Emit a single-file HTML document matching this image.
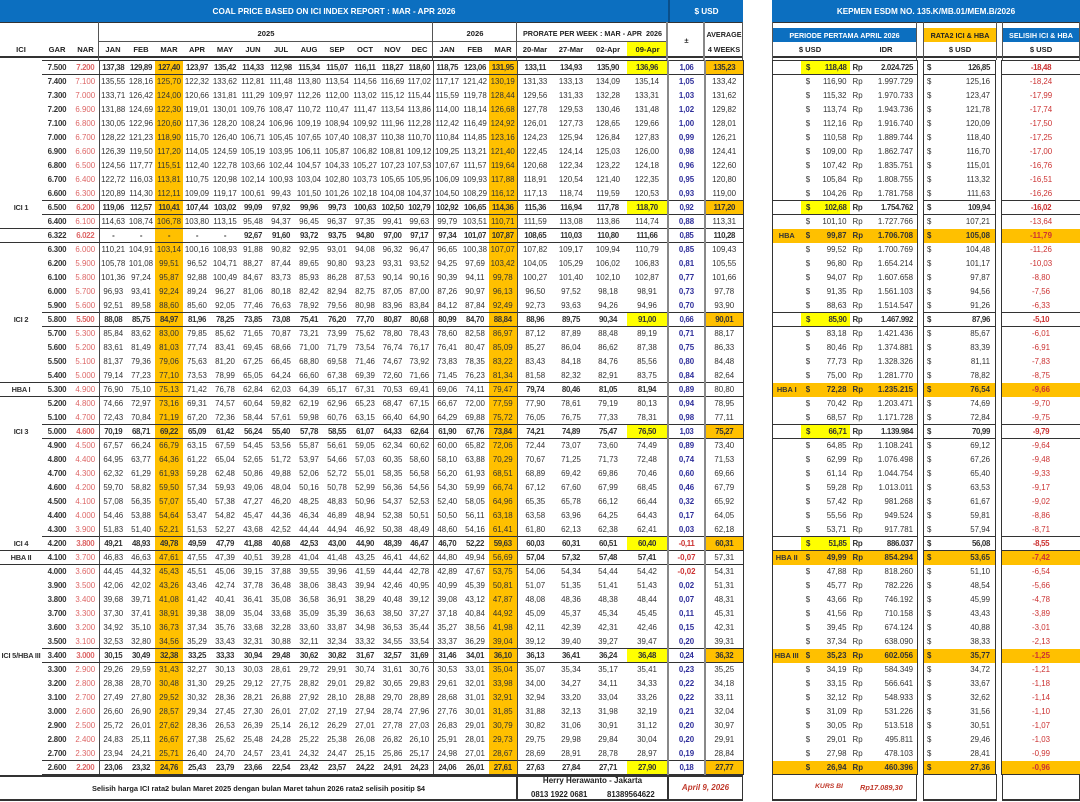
<!DOCTYPE html>
<html><head><meta charset="utf-8">
<style>
*{box-sizing:border-box}
body{margin:0;width:1080px;height:802px;overflow:hidden;background:#fff;font-family:"Liberation Sans",Arial,sans-serif;font-size:7.9px;color:#333;position:relative}
.a{position:absolute}
.blue{background:#0c6fc0;color:#fff;font-weight:bold;display:flex;align-items:center;justify-content:center;font-size:8.2px;white-space:nowrap}
.h{position:absolute;font-weight:bold;font-size:7.6px;text-align:center;color:#222;white-space:nowrap}
.vl{position:absolute;width:1px;background:#555}
.hl{position:absolute;height:1px;background:#555}
table{position:absolute;border-collapse:collapse;table-layout:fixed}
td{height:14px;padding:0;text-align:center;white-space:nowrap;line-height:13px;overflow:visible}
b{letter-spacing:-0.3px}
#L{left:0;top:60px;width:743px}
#L td:nth-child(1){font-weight:bold;font-size:7.4px;letter-spacing:-0.2px}
#L td:nth-child(2){font-weight:bold;letter-spacing:-0.2px}
#L td:nth-child(3){color:#d66}
#L td:nth-child(3),#L td:nth-child(15),#L td:nth-child(18){border-right:1px solid #444}
#L td:nth-child(22),#L td:nth-child(23){border-right:2px solid #888}
#L td:nth-child(24){border-right:1px solid #333}
#L td:nth-child(6),#L td:nth-child(18){background:#ffc000}
#L td:nth-child(23){color:#2e2e9a;font-weight:bold}
#L td.n{color:#c33}
tr.i td{font-weight:bold;letter-spacing:-0.35px;border-top:1.5px solid #333;border-bottom:1.5px solid #333}
#L tr.i td:nth-child(22){background:#ffff00}
#L tr.i td:nth-child(24){background:#ffc000}
#L tr.i td:nth-child(1),#R tr.i td:nth-child(6),#R tr.i td:nth-child(9){border-top:none;border-bottom:none}
tr.bx td{border-top:1px solid #333;border-bottom:1px solid #333}
tr.bb td{font-weight:bold;letter-spacing:-0.35px}
#R{left:772px;top:60px;width:308px}
#R td:nth-child(1){border-left:1px solid #333;font-weight:bold;font-size:7.4px}
#R td:nth-child(3){text-align:right;padding-right:3px}
#R td:nth-child(4){text-align:left;padding-left:3px}
#R td:nth-child(5){text-align:right;padding-right:4px;border-right:1px solid #333}
#R td:nth-child(7){text-align:left;padding-left:3px;border-left:1px solid #333}
#R td:nth-child(8){text-align:right;padding-right:5px;border-right:1px solid #333}
#R td:nth-child(10){color:#c33;border-left:1px solid #333;border-right:1px solid #333}
#R tr.o td{background:#ffc000;font-weight:bold}
#R tr.o td:nth-child(6),#R tr.o td:nth-child(9){background:#fff}
#R tr.y td:nth-child(2),#R tr.y td:nth-child(3){background:#ffff00}
</style></head><body>
<div class="a blue" style="left:0;top:0;width:668px;height:22px">COAL PRICE BASED ON ICI INDEX REPORT : MAR - APR 2026</div>
<div class="a blue" style="left:668px;top:0;width:75px;height:22px;border-left:2px solid #0a4f8a">$ USD</div>
<div class="a blue" style="left:772px;top:0;width:308px;height:22px">KEPMEN ESDM NO. 135.K/MB.01/MEM.B/2026</div>
<div class="h" style="left:99px;top:29px;width:334px">2025</div>
<div class="h" style="left:433px;top:29px;width:84px">2026</div>
<div class="h" style="left:517px;top:29px;width:151px;font-size:7.2px">PRORATE PER WEEK : MAR - APR &nbsp;2026</div>
<div class="h" style="left:668px;top:36px;width:37px">±</div>
<div class="h" style="left:705px;top:30px;width:38px;font-size:7.2px">AVERAGE</div>
<div class="h" style="left:705px;top:45px;width:38px;font-size:7.2px">4 WEEKS</div>
<div class="a" style="left:627px;top:42px;width:41px;height:14px;background:#ffff00"></div>
<div class="h" style="left:0;top:45px;width:42px">ICI</div>
<div class="h" style="left:42px;top:45px;width:30px">GAR</div>
<div class="h" style="left:72px;top:45px;width:27px">NAR</div>
<div class="h" style="left:99px;top:45px;width:28px">JAN</div>
<div class="h" style="left:127px;top:45px;width:28px">FEB</div>
<div class="h" style="left:155px;top:45px;width:28px">MAR</div>
<div class="h" style="left:183px;top:45px;width:28px">APR</div>
<div class="h" style="left:211px;top:45px;width:28px">MAY</div>
<div class="h" style="left:239px;top:45px;width:28px">JUN</div>
<div class="h" style="left:267px;top:45px;width:28px">JUL</div>
<div class="h" style="left:295px;top:45px;width:28px">AUG</div>
<div class="h" style="left:323px;top:45px;width:28px">SEP</div>
<div class="h" style="left:351px;top:45px;width:28px">OCT</div>
<div class="h" style="left:379px;top:45px;width:27px">NOV</div>
<div class="h" style="left:406px;top:45px;width:27px">DEC</div>
<div class="h" style="left:433px;top:45px;width:28px">JAN</div>
<div class="h" style="left:461px;top:45px;width:28px">FEB</div>
<div class="h" style="left:489px;top:45px;width:28px">MAR</div>
<div class="h" style="left:517px;top:45px;width:36px">20-Mar</div>
<div class="h" style="left:553px;top:45px;width:36px">27-Mar</div>
<div class="h" style="left:589px;top:45px;width:38px">02-Apr</div>
<div class="h" style="left:627px;top:45px;width:41px">09-Apr</div>
<div class="hl" style="left:0;top:22px;width:743px;background:#333"></div>
<div class="hl" style="left:99px;top:41px;width:569px"></div>
<div class="hl" style="left:0;top:56px;width:743px;height:2px;background:#333"></div>
<div class="vl" style="left:98px;top:22px;height:38px"></div>
<div class="vl" style="left:432px;top:22px;height:38px"></div>
<div class="vl" style="left:516px;top:22px;height:38px"></div>
<div class="vl" style="left:666px;top:22px;height:38px;width:2px;background:#888"></div>
<div class="vl" style="left:703px;top:22px;height:38px;width:2px;background:#888"></div>
<div class="vl" style="left:742px;top:22px;height:38px"></div>
<div class="a blue" style="left:772px;top:28px;width:145px;height:14px;font-size:7.2px">PERIODE PERTAMA APRIL 2026</div>
<div class="a blue" style="left:923px;top:28px;width:74px;height:14px;font-size:7.2px;background:#ffc000;color:#222">RATA2 ICI &amp; HBA</div>
<div class="a blue" style="left:1002px;top:28px;width:78px;height:14px;font-size:7.2px">SELISIH ICI &amp; HBA</div>
<div class="h" style="left:795px;top:45px;width:30px">$ USD</div>
<div class="h" style="left:866px;top:45px;width:40px">IDR</div>
<div class="h" style="left:923px;top:45px;width:74px">$ USD</div>
<div class="h" style="left:1002px;top:45px;width:78px">$ USD</div>
<div class="hl" style="left:772px;top:22px;width:308px;background:#333"></div>
<div class="hl" style="left:772px;top:56px;width:308px;height:2px;background:#333"></div>
<div class="vl" style="left:772px;top:22px;height:38px"></div>
<div class="vl" style="left:916px;top:22px;height:38px"></div>
<div class="vl" style="left:923px;top:22px;height:38px"></div>
<div class="vl" style="left:996px;top:22px;height:38px"></div>
<div class="vl" style="left:1002px;top:22px;height:38px"></div>
<div class="vl" style="left:1079px;top:22px;height:38px"></div>

<table id="L">
<colgroup><col style="width:42px"><col style="width:30px"><col style="width:27px"><col style="width:28px"><col style="width:28px"><col style="width:28px"><col style="width:28px"><col style="width:28px"><col style="width:28px"><col style="width:28px"><col style="width:28px"><col style="width:28px"><col style="width:28px"><col style="width:27px"><col style="width:27px"><col style="width:28px"><col style="width:28px"><col style="width:28px"><col style="width:36px"><col style="width:36px"><col style="width:38px"><col style="width:41px"><col style="width:37px"><col style="width:38px"></colgroup>
<tr class="i"><td><td>7.500<td>7.200<td>137,38<td>129,89<td>127,40<td>123,97<td>135,42<td>114,33<td>112,98<td>115,34<td>115,07<td>116,11<td>118,27<td>118,60<td>118,75<td>123,06<td>131,95<td>133,11<td>134,93<td>135,90<td>136,96<td>1,06<td>135,23</tr>
<tr><td><td>7.400<td>7.100<td>135,55<td>128,16<td>125,70<td>122,32<td>133,62<td>112,81<td>111,48<td>113,80<td>113,54<td>114,56<td>116,69<td>117,02<td>117,17<td>121,42<td>130,19<td>131,33<td>133,13<td>134,09<td>135,14<td>1,05<td>133,42</tr>
<tr><td><td>7.300<td>7.000<td>133,71<td>126,42<td>124,00<td>120,66<td>131,81<td>111,29<td>109,97<td>112,26<td>112,00<td>113,02<td>115,12<td>115,44<td>115,59<td>119,78<td>128,44<td>129,56<td>131,33<td>132,28<td>133,31<td>1,03<td>131,62</tr>
<tr><td><td>7.200<td>6.900<td>131,88<td>124,69<td>122,30<td>119,01<td>130,01<td>109,76<td>108,47<td>110,72<td>110,47<td>111,47<td>113,54<td>113,86<td>114,00<td>118,14<td>126,68<td>127,78<td>129,53<td>130,46<td>131,48<td>1,02<td>129,82</tr>
<tr><td><td>7.100<td>6.800<td>130,05<td>122,96<td>120,60<td>117,36<td>128,20<td>108,24<td>106,96<td>109,19<td>108,94<td>109,92<td>111,96<td>112,28<td>112,42<td>116,49<td>124,92<td>126,01<td>127,73<td>128,65<td>129,66<td>1,00<td>128,01</tr>
<tr><td><td>7.000<td>6.700<td>128,22<td>121,23<td>118,90<td>115,70<td>126,40<td>106,71<td>105,45<td>107,65<td>107,40<td>108,37<td>110,38<td>110,70<td>110,84<td>114,85<td>123,16<td>124,23<td>125,94<td>126,84<td>127,83<td>0,99<td>126,21</tr>
<tr><td><td>6.900<td>6.600<td>126,39<td>119,50<td>117,20<td>114,05<td>124,59<td>105,19<td>103,95<td>106,11<td>105,87<td>106,82<td>108,81<td>109,12<td>109,25<td>113,21<td>121,40<td>122,45<td>124,14<td>125,03<td>126,00<td>0,98<td>124,41</tr>
<tr><td><td>6.800<td>6.500<td>124,56<td>117,77<td>115,51<td>112,40<td>122,78<td>103,66<td>102,44<td>104,57<td>104,33<td>105,27<td>107,23<td>107,53<td>107,67<td>111,57<td>119,64<td>120,68<td>122,34<td>123,22<td>124,18<td>0,96<td>122,60</tr>
<tr><td><td>6.700<td>6.400<td>122,72<td>116,03<td>113,81<td>110,75<td>120,98<td>102,14<td>100,93<td>103,04<td>102,80<td>103,73<td>105,65<td>105,95<td>106,09<td>109,93<td>117,88<td>118,91<td>120,54<td>121,40<td>122,35<td>0,95<td>120,80</tr>
<tr><td><td>6.600<td>6.300<td>120,89<td>114,30<td>112,11<td>109,09<td>119,17<td>100,61<td>99,43<td>101,50<td>101,26<td>102,18<td>104,08<td>104,37<td>104,50<td>108,29<td>116,12<td>117,13<td>118,74<td>119,59<td>120,53<td>0,93<td>119,00</tr>
<tr class="i"><td>ICI 1<td>6.500<td>6.200<td>119,06<td>112,57<td>110,41<td>107,44<td>103,02<td>99,09<td>97,92<td>99,96<td>99,73<td>100,63<td>102,50<td>102,79<td>102,92<td>106,65<td>114,36<td>115,36<td>116,94<td>117,78<td>118,70<td>0,92<td>117,20</tr>
<tr><td><td>6.400<td>6.100<td>114,63<td>108,74<td>106,78<td>103,80<td>113,15<td>95,48<td>94,37<td>96,45<td>96,37<td>97,35<td>99,41<td>99,63<td>99,79<td>103,51<td>110,71<td>111,59<td>113,08<td>113,86<td>114,74<td>0,88<td>113,31</tr>
<tr class="bx bb"><td><td>6.322<td>6.022<td>-<td>-<td>-<td>-<td>-<td>92,67<td>91,60<td>93,72<td>93,75<td>94,80<td>97,00<td>97,17<td>97,34<td>101,07<td>107,87<td>108,65<td>110,03<td>110,80<td>111,66<td>0,85<td>110,28</tr>
<tr><td><td>6.300<td>6.000<td>110,21<td>104,91<td>103,14<td>100,16<td>108,93<td>91,88<td>90,82<td>92,95<td>93,01<td>94,08<td>96,32<td>96,47<td>96,65<td>100,38<td>107,07<td>107,82<td>109,17<td>109,94<td>110,79<td>0,85<td>109,43</tr>
<tr><td><td>6.200<td>5.900<td>105,78<td>101,08<td>99,51<td>96,52<td>104,71<td>88,27<td>87,44<td>89,65<td>90,80<td>93,23<td>93,31<td>93,52<td>94,25<td>97,69<td>103,42<td>104,05<td>105,29<td>106,02<td>106,83<td>0,81<td>105,55</tr>
<tr><td><td>6.100<td>5.800<td>101,36<td>97,24<td>95,87<td>92,88<td>100,49<td>84,67<td>83,73<td>85,93<td>86,28<td>87,53<td>90,14<td>90,16<td>90,39<td>94,11<td>99,78<td>100,27<td>101,40<td>102,10<td>102,87<td>0,77<td>101,66</tr>
<tr><td><td>6.000<td>5.700<td>96,93<td>93,41<td>92,24<td>89,24<td>96,27<td>81,06<td>80,18<td>82,42<td>82,94<td>82,75<td>87,05<td>87,00<td>87,26<td>90,97<td>96,13<td>96,50<td>97,52<td>98,18<td>98,91<td>0,73<td>97,78</tr>
<tr><td><td>5.900<td>5.600<td>92,51<td>89,58<td>88,60<td>85,60<td>92,05<td>77,46<td>76,63<td>78,92<td>79,56<td>80,98<td>83,96<td>83,84<td>84,12<td>87,84<td>92,49<td>92,73<td>93,63<td>94,26<td>94,96<td>0,70<td>93,90</tr>
<tr class="i"><td>ICI 2<td>5.800<td>5.500<td>88,08<td>85,75<td>84,97<td>81,96<td>78,25<td>73,85<td>73,08<td>75,41<td>76,20<td>77,70<td>80,87<td>80,68<td>80,99<td>84,70<td>88,84<td>88,96<td>89,75<td>90,34<td>91,00<td>0,66<td>90,01</tr>
<tr><td><td>5.700<td>5.300<td>85,84<td>83,62<td>83,00<td>79,85<td>85,62<td>71,65<td>70,87<td>73,21<td>73,99<td>75,62<td>78,80<td>78,43<td>78,60<td>82,58<td>86,97<td>87,12<td>87,89<td>88,48<td>89,19<td>0,71<td>88,17</tr>
<tr><td><td>5.600<td>5.200<td>83,61<td>81,49<td>81,03<td>77,74<td>83,41<td>69,45<td>68,66<td>71,00<td>71,79<td>73,54<td>76,74<td>76,17<td>76,41<td>80,47<td>85,09<td>85,27<td>86,04<td>86,62<td>87,38<td>0,75<td>86,33</tr>
<tr><td><td>5.500<td>5.100<td>81,37<td>79,36<td>79,06<td>75,63<td>81,20<td>67,25<td>66,45<td>68,80<td>69,58<td>71,46<td>74,67<td>73,92<td>73,83<td>78,35<td>83,22<td>83,43<td>84,18<td>84,76<td>85,56<td>0,80<td>84,48</tr>
<tr><td><td>5.400<td>5.000<td>79,14<td>77,23<td>77,10<td>73,53<td>78,99<td>65,05<td>64,24<td>66,60<td>67,38<td>69,39<td>72,60<td>71,66<td>71,45<td>76,23<td>81,34<td>81,58<td>82,32<td>82,91<td>83,75<td>0,84<td>82,64</tr>
<tr class="bx"><td>HBA I<td>5.300<td>4.900<td>76,90<td>75,10<td>75,13<td>71,42<td>76,78<td>62,84<td>62,03<td>64,39<td>65,17<td>67,31<td>70,53<td>69,41<td>69,06<td>74,11<td>79,47<td><b>79,74</b><td><b>80,46</b><td><b>81,05</b><td><b>81,94</b><td>0,89<td>80,80</tr>
<tr><td><td>5.200<td>4.800<td>74,66<td>72,97<td>73,16<td>69,31<td>74,57<td>60,64<td>59,82<td>62,19<td>62,96<td>65,23<td>68,47<td>67,15<td>66,67<td>72,00<td>77,59<td>77,90<td>78,61<td>79,19<td>80,13<td>0,94<td>78,95</tr>
<tr><td><td>5.100<td>4.700<td>72,43<td>70,84<td>71,19<td>67,20<td>72,36<td>58,44<td>57,61<td>59,98<td>60,76<td>63,15<td>66,40<td>64,90<td>64,29<td>69,88<td>75,72<td>76,05<td>76,75<td>77,33<td>78,31<td>0,98<td>77,11</tr>
<tr class="i"><td>ICI 3<td>5.000<td>4.600<td>70,19<td>68,71<td>69,22<td>65,09<td>61,42<td>56,24<td>55,40<td>57,78<td>58,55<td>61,07<td>64,33<td>62,64<td>61,90<td>67,76<td>73,84<td>74,21<td>74,89<td>75,47<td>76,50<td>1,03<td>75,27</tr>
<tr><td><td>4.900<td>4.500<td>67,57<td>66,24<td>66,79<td>63,15<td>67,59<td>54,45<td>53,56<td>55,87<td>56,61<td>59,05<td>62,34<td>60,62<td>60,00<td>65,82<td>72,06<td>72,44<td>73,07<td>73,60<td>74,49<td>0,89<td>73,40</tr>
<tr><td><td>4.800<td>4.400<td>64,95<td>63,77<td>64,36<td>61,22<td>65,04<td>52,65<td>51,72<td>53,97<td>54,66<td>57,03<td>60,35<td>58,60<td>58,10<td>63,88<td>70,29<td>70,67<td>71,25<td>71,73<td>72,48<td>0,74<td>71,53</tr>
<tr><td><td>4.700<td>4.300<td>62,32<td>61,29<td>61,93<td>59,28<td>62,48<td>50,86<td>49,88<td>52,06<td>52,72<td>55,01<td>58,35<td>56,58<td>56,20<td>61,93<td>68,51<td>68,89<td>69,42<td>69,86<td>70,46<td>0,60<td>69,66</tr>
<tr><td><td>4.600<td>4.200<td>59,70<td>58,82<td>59,50<td>57,34<td>59,93<td>49,06<td>48,04<td>50,16<td>50,78<td>52,99<td>56,36<td>54,56<td>54,30<td>59,99<td>66,74<td>67,12<td>67,60<td>67,99<td>68,45<td>0,46<td>67,79</tr>
<tr><td><td>4.500<td>4.100<td>57,08<td>56,35<td>57,07<td>55,40<td>57,38<td>47,27<td>46,20<td>48,25<td>48,83<td>50,96<td>54,37<td>52,53<td>52,40<td>58,05<td>64,96<td>65,35<td>65,78<td>66,12<td>66,44<td>0,32<td>65,92</tr>
<tr><td><td>4.400<td>4.000<td>54,46<td>53,88<td>54,64<td>53,47<td>54,82<td>45,47<td>44,36<td>46,34<td>46,89<td>48,94<td>52,38<td>50,51<td>50,50<td>56,11<td>63,18<td>63,58<td>63,96<td>64,25<td>64,43<td>0,17<td>64,05</tr>
<tr><td><td>4.300<td>3.900<td>51,83<td>51,40<td>52,21<td>51,53<td>52,27<td>43,68<td>42,52<td>44,44<td>44,94<td>46,92<td>50,38<td>48,49<td>48,60<td>54,16<td>61,41<td>61,80<td>62,13<td>62,38<td>62,41<td>0,03<td>62,18</tr>
<tr class="i"><td>ICI 4<td>4.200<td>3.800<td>49,21<td>48,93<td>49,78<td>49,59<td>47,79<td>41,88<td>40,68<td>42,53<td>43,00<td>44,90<td>48,39<td>46,47<td>46,70<td>52,22<td>59,63<td>60,03<td>60,31<td>60,51<td>60,40<td class="n">-0,11<td>60,31</tr>
<tr class="bx"><td>HBA II<td>4.100<td>3.700<td>46,83<td>46,63<td>47,61<td>47,55<td>47,39<td>40,51<td>39,28<td>41,04<td>41,48<td>43,25<td>46,41<td>44,62<td>44,80<td>49,94<td>56,69<td><b>57,04</b><td><b>57,32</b><td><b>57,48</b><td><b>57,41</b><td class="n">-0,07<td>57,31</tr>
<tr><td><td>4.000<td>3.600<td>44,45<td>44,32<td>45,43<td>45,51<td>45,06<td>39,15<td>37,88<td>39,55<td>39,96<td>41,59<td>44,44<td>42,78<td>42,89<td>47,67<td>53,75<td>54,06<td>54,34<td>54,44<td>54,42<td class="n">-0,02<td>54,31</tr>
<tr><td><td>3.900<td>3.500<td>42,06<td>42,02<td>43,26<td>43,46<td>42,74<td>37,78<td>36,48<td>38,06<td>38,43<td>39,94<td>42,46<td>40,95<td>40,99<td>45,39<td>50,81<td>51,07<td>51,35<td>51,41<td>51,43<td>0,02<td>51,31</tr>
<tr><td><td>3.800<td>3.400<td>39,68<td>39,71<td>41,08<td>41,42<td>40,41<td>36,41<td>35,08<td>36,58<td>36,91<td>38,29<td>40,48<td>39,12<td>39,08<td>43,12<td>47,87<td>48,08<td>48,36<td>48,38<td>48,44<td>0,07<td>48,31</tr>
<tr><td><td>3.700<td>3.300<td>37,30<td>37,41<td>38,91<td>39,38<td>38,09<td>35,04<td>33,68<td>35,09<td>35,39<td>36,63<td>38,50<td>37,27<td>37,18<td>40,84<td>44,92<td>45,09<td>45,37<td>45,34<td>45,45<td>0,11<td>45,31</tr>
<tr><td><td>3.600<td>3.200<td>34,92<td>35,10<td>36,73<td>37,34<td>35,76<td>33,68<td>32,28<td>33,60<td>33,87<td>34,98<td>36,53<td>35,44<td>35,27<td>38,56<td>41,98<td>42,11<td>42,39<td>42,31<td>42,46<td>0,15<td>42,31</tr>
<tr><td><td>3.500<td>3.100<td>32,53<td>32,80<td>34,56<td>35,29<td>33,43<td>32,31<td>30,88<td>32,11<td>32,34<td>33,32<td>34,55<td>33,54<td>33,37<td>36,29<td>39,04<td>39,12<td>39,40<td>39,27<td>39,47<td>0,20<td>39,31</tr>
<tr class="i"><td>ICI 5/HBA III<td>3.400<td>3.000<td>30,15<td>30,49<td>32,38<td>33,25<td>33,33<td>30,94<td>29,48<td>30,62<td>30,82<td>31,67<td>32,57<td>31,69<td>31,46<td>34,01<td>36,10<td>36,13<td>36,41<td>36,24<td>36,48<td>0,24<td>36,32</tr>
<tr><td><td>3.300<td>2.900<td>29,26<td>29,59<td>31,43<td>32,27<td>30,13<td>30,03<td>28,61<td>29,72<td>29,91<td>30,74<td>31,61<td>30,76<td>30,53<td>33,01<td>35,04<td>35,07<td>35,34<td>35,17<td>35,41<td>0,23<td>35,25</tr>
<tr><td><td>3.200<td>2.800<td>28,38<td>28,70<td>30,48<td>31,30<td>29,25<td>29,12<td>27,75<td>28,82<td>29,01<td>29,82<td>30,65<td>29,83<td>29,61<td>32,01<td>33,98<td>34,00<td>34,27<td>34,11<td>34,33<td>0,22<td>34,18</tr>
<tr><td><td>3.100<td>2.700<td>27,49<td>27,80<td>29,52<td>30,32<td>28,36<td>28,21<td>26,88<td>27,92<td>28,10<td>28,88<td>29,70<td>28,89<td>28,68<td>31,01<td>32,91<td>32,94<td>33,20<td>33,04<td>33,26<td>0,22<td>33,11</tr>
<tr><td><td>3.000<td>2.600<td>26,60<td>26,90<td>28,57<td>29,34<td>27,45<td>27,30<td>26,01<td>27,02<td>27,19<td>27,94<td>28,74<td>27,96<td>27,76<td>30,01<td>31,85<td>31,88<td>32,13<td>31,98<td>32,19<td>0,21<td>32,04</tr>
<tr><td><td>2.900<td>2.500<td>25,72<td>26,01<td>27,62<td>28,36<td>26,53<td>26,39<td>25,14<td>26,12<td>26,29<td>27,01<td>27,78<td>27,03<td>26,83<td>29,01<td>30,79<td>30,82<td>31,06<td>30,91<td>31,12<td>0,20<td>30,97</tr>
<tr><td><td>2.800<td>2.400<td>24,83<td>25,11<td>26,67<td>27,38<td>25,62<td>25,48<td>24,28<td>25,22<td>25,38<td>26,08<td>26,82<td>26,10<td>25,91<td>28,01<td>29,73<td>29,75<td>29,98<td>29,84<td>30,04<td>0,20<td>29,91</tr>
<tr><td><td>2.700<td>2.300<td>23,94<td>24,21<td>25,71<td>26,40<td>24,70<td>24,57<td>23,41<td>24,32<td>24,47<td>25,15<td>25,86<td>25,17<td>24,98<td>27,01<td>28,67<td>28,69<td>28,91<td>28,78<td>28,97<td>0,19<td>28,84</tr>
<tr class="i"><td><td>2.600<td>2.200<td>23,06<td>23,32<td>24,76<td>25,43<td>23,79<td>23,66<td>22,54<td>23,42<td>23,57<td>24,22<td>24,91<td>24,23<td>24,06<td>26,01<td>27,61<td>27,63<td>27,84<td>27,71<td>27,90<td>0,18<td>27,77</tr>
</table>

<table id="R">
<colgroup><col style="width:28px"><col style="width:15px"><col style="width:34px"><col style="width:17px"><col style="width:51px"><col style="width:6px"><col style="width:13px"><col style="width:59px"><col style="width:6px"><col style="width:79px"></colgroup>
<tr class="i y"><td><td>$<td>118,48<td>Rp<td>2.024.725<td><td>$<td>126,85<td><td>-18,48</tr>
<tr><td><td>$<td>116,90<td>Rp<td>1.997.729<td><td>$<td>125,16<td><td>-18,24</tr>
<tr><td><td>$<td>115,32<td>Rp<td>1.970.733<td><td>$<td>123,47<td><td>-17,99</tr>
<tr><td><td>$<td>113,74<td>Rp<td>1.943.736<td><td>$<td>121,78<td><td>-17,74</tr>
<tr><td><td>$<td>112,16<td>Rp<td>1.916.740<td><td>$<td>120,09<td><td>-17,50</tr>
<tr><td><td>$<td>110,58<td>Rp<td>1.889.744<td><td>$<td>118,40<td><td>-17,25</tr>
<tr><td><td>$<td>109,00<td>Rp<td>1.862.747<td><td>$<td>116,70<td><td>-17,00</tr>
<tr><td><td>$<td>107,42<td>Rp<td>1.835.751<td><td>$<td>115,01<td><td>-16,76</tr>
<tr><td><td>$<td>105,84<td>Rp<td>1.808.755<td><td>$<td>113,32<td><td>-16,51</tr>
<tr><td><td>$<td>104,26<td>Rp<td>1.781.758<td><td>$<td>111,63<td><td>-16,26</tr>
<tr class="i y"><td><td>$<td>102,68<td>Rp<td>1.754.762<td><td>$<td>109,94<td><td>-16,02</tr>
<tr><td><td>$<td>101,10<td>Rp<td>1.727.766<td><td>$<td>107,21<td><td>-13,64</tr>
<tr class="o"><td>HBA<td>$<td>99,87<td>Rp<td>1.706.708<td><td>$<td>105,08<td><td>-11,79</tr>
<tr><td><td>$<td>99,52<td>Rp<td>1.700.769<td><td>$<td>104,48<td><td>-11,26</tr>
<tr><td><td>$<td>96,80<td>Rp<td>1.654.214<td><td>$<td>101,17<td><td>-10,03</tr>
<tr><td><td>$<td>94,07<td>Rp<td>1.607.658<td><td>$<td>97,87<td><td>-8,80</tr>
<tr><td><td>$<td>91,35<td>Rp<td>1.561.103<td><td>$<td>94,56<td><td>-7,56</tr>
<tr><td><td>$<td>88,63<td>Rp<td>1.514.547<td><td>$<td>91,26<td><td>-6,33</tr>
<tr class="i y"><td><td>$<td>85,90<td>Rp<td>1.467.992<td><td>$<td>87,96<td><td>-5,10</tr>
<tr><td><td>$<td>83,18<td>Rp<td>1.421.436<td><td>$<td>85,67<td><td>-6,01</tr>
<tr><td><td>$<td>80,46<td>Rp<td>1.374.881<td><td>$<td>83,39<td><td>-6,91</tr>
<tr><td><td>$<td>77,73<td>Rp<td>1.328.326<td><td>$<td>81,11<td><td>-7,83</tr>
<tr><td><td>$<td>75,00<td>Rp<td>1.281.770<td><td>$<td>78,82<td><td>-8,75</tr>
<tr class="o"><td>HBA I<td>$<td>72,28<td>Rp<td>1.235.215<td><td>$<td>76,54<td><td>-9,66</tr>
<tr><td><td>$<td>70,42<td>Rp<td>1.203.471<td><td>$<td>74,69<td><td>-9,70</tr>
<tr><td><td>$<td>68,57<td>Rp<td>1.171.728<td><td>$<td>72,84<td><td>-9,75</tr>
<tr class="i y"><td><td>$<td>66,71<td>Rp<td>1.139.984<td><td>$<td>70,99<td><td>-9,79</tr>
<tr><td><td>$<td>64,85<td>Rp<td>1.108.241<td><td>$<td>69,12<td><td>-9,64</tr>
<tr><td><td>$<td>62,99<td>Rp<td>1.076.498<td><td>$<td>67,26<td><td>-9,48</tr>
<tr><td><td>$<td>61,14<td>Rp<td>1.044.754<td><td>$<td>65,40<td><td>-9,33</tr>
<tr><td><td>$<td>59,28<td>Rp<td>1.013.011<td><td>$<td>63,53<td><td>-9,17</tr>
<tr><td><td>$<td>57,42<td>Rp<td>981.268<td><td>$<td>61,67<td><td>-9,02</tr>
<tr><td><td>$<td>55,56<td>Rp<td>949.524<td><td>$<td>59,81<td><td>-8,86</tr>
<tr><td><td>$<td>53,71<td>Rp<td>917.781<td><td>$<td>57,94<td><td>-8,71</tr>
<tr class="i y"><td><td>$<td>51,85<td>Rp<td>886.037<td><td>$<td>56,08<td><td>-8,55</tr>
<tr class="o"><td>HBA II<td>$<td>49,99<td>Rp<td>854.294<td><td>$<td>53,65<td><td>-7,42</tr>
<tr><td><td>$<td>47,88<td>Rp<td>818.260<td><td>$<td>51,10<td><td>-6,54</tr>
<tr><td><td>$<td>45,77<td>Rp<td>782.226<td><td>$<td>48,54<td><td>-5,66</tr>
<tr><td><td>$<td>43,66<td>Rp<td>746.192<td><td>$<td>45,99<td><td>-4,78</tr>
<tr><td><td>$<td>41,56<td>Rp<td>710.158<td><td>$<td>43,43<td><td>-3,89</tr>
<tr><td><td>$<td>39,45<td>Rp<td>674.124<td><td>$<td>40,88<td><td>-3,01</tr>
<tr><td><td>$<td>37,34<td>Rp<td>638.090<td><td>$<td>38,33<td><td>-2,13</tr>
<tr class="o"><td>HBA III<td>$<td>35,23<td>Rp<td>602.056<td><td>$<td>35,77<td><td>-1,25</tr>
<tr><td><td>$<td>34,19<td>Rp<td>584.349<td><td>$<td>34,72<td><td>-1,21</tr>
<tr><td><td>$<td>33,15<td>Rp<td>566.641<td><td>$<td>33,67<td><td>-1,18</tr>
<tr><td><td>$<td>32,12<td>Rp<td>548.933<td><td>$<td>32,62<td><td>-1,14</tr>
<tr><td><td>$<td>31,09<td>Rp<td>531.226<td><td>$<td>31,56<td><td>-1,10</tr>
<tr><td><td>$<td>30,05<td>Rp<td>513.518<td><td>$<td>30,51<td><td>-1,07</tr>
<tr><td><td>$<td>29,01<td>Rp<td>495.811<td><td>$<td>29,46<td><td>-1,03</tr>
<tr><td><td>$<td>27,98<td>Rp<td>478.103<td><td>$<td>28,41<td><td>-0,99</tr>
<tr class="o"><td><td>$<td>26,94<td>Rp<td>460.396<td><td>$<td>27,36<td><td>-0,96</tr>
</table>

<div class="a" style="left:0;top:775px;width:743px;height:26px;border-top:2px solid #333;border-bottom:2px solid #333;border-right:1px solid #333"></div>
<div class="a" style="left:0;top:784px;width:517px;text-align:center;font-size:7.4px;font-weight:bold;color:#222">Selisih harga ICI rata2 bulan Maret 2025 dengan bulan Maret tahun 2026 rata2 selisih positip $4</div>
<div class="vl" style="left:516px;top:775px;height:26px;width:2px;background:#333"></div>
<div class="vl" style="left:667px;top:775px;height:26px;width:2px;background:#333"></div>
<div class="a" style="left:517px;top:776px;width:151px;text-align:center;font-size:8px;font-weight:bold;color:#222">Herry Herawanto - Jakarta</div>
<div class="a" style="left:517px;top:790px;width:151px;font-size:7.8px;font-weight:bold;color:#222"><span style="position:absolute;left:14px">0813 1922 0681</span><span style="position:absolute;left:90px">81389564622</span></div>
<div class="a" style="left:668px;top:783px;width:75px;text-align:center;font-size:8px;font-weight:bold;font-style:italic;color:#c0392b">April 9, 2026</div>
<div class="a" style="left:772px;top:774px;width:145px;height:27px;border:1px solid #333;border-bottom:2px solid #333"></div>
<div class="a" style="left:815px;top:783px;font-size:6.8px;font-weight:bold;font-style:italic;color:#c0392b">KURS BI</div>
<div class="a" style="left:860px;top:783px;font-size:7.4px;font-weight:bold;font-style:italic;color:#c0392b">Rp17.089,30</div>
<div class="a" style="left:923px;top:774px;width:74px;height:27px;border:1px solid #333;border-bottom:2px solid #333"></div>
<div class="a" style="left:1002px;top:774px;width:78px;height:27px;border:1px solid #333;border-bottom:2px solid #333"></div>
</body></html>
